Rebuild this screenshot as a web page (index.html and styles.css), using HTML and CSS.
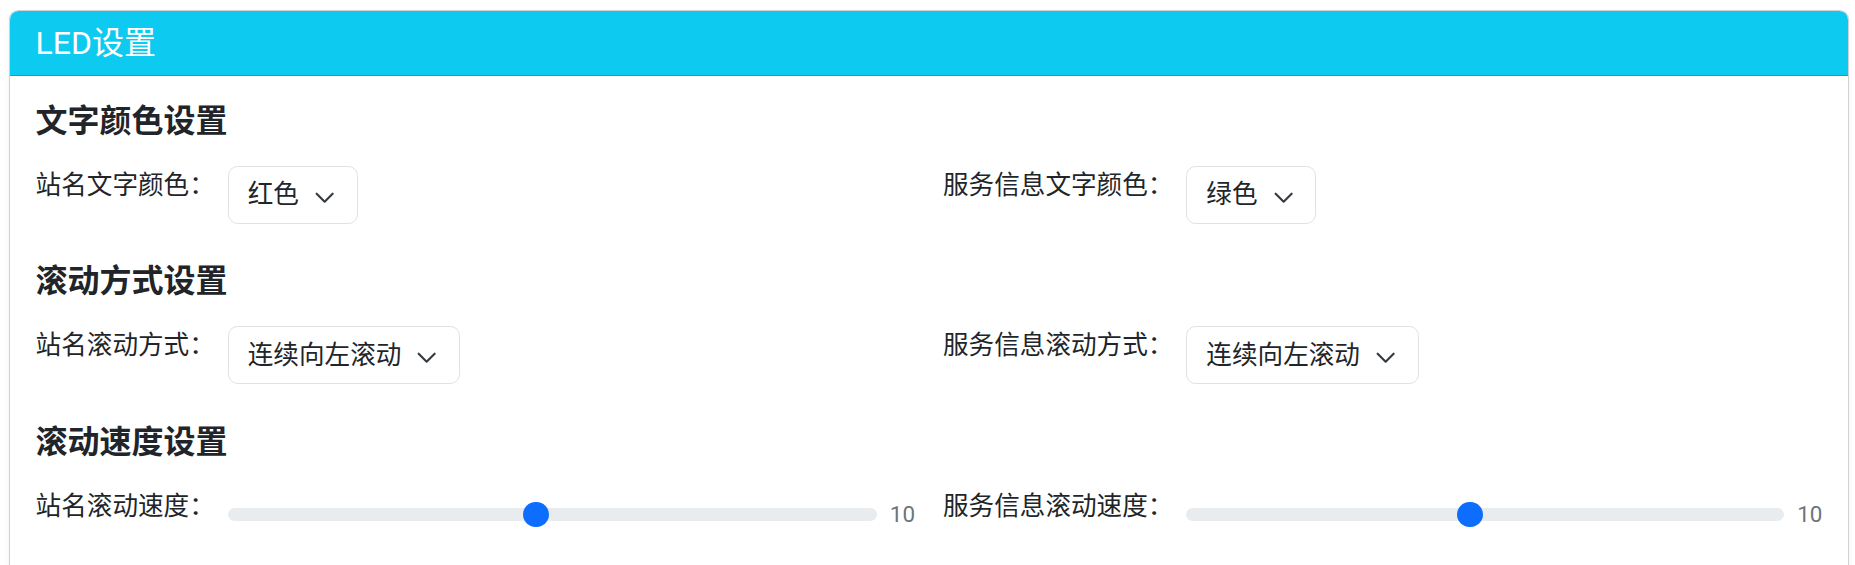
FILE: index.html
```html
<!DOCTYPE html>
<html lang="zh-CN">
<head>
<meta charset="utf-8">
<title>LED设置</title>
<link rel="stylesheet" href="styles.css">
</head>
<body>
<div class="page">
  <div class="card">
    <div class="card-header">LED设置</div>
    <div class="card-body">
      <section class="group">
        <h2 class="group-title">文字颜色设置</h2>
        <div class="grid">
          <div class="field">
            <span class="label">站名文字颜色：</span>
            <div class="select"><span>红色</span><svg class="chev" viewBox="0 0 16 12" width="21.3" height="16"><path d="M2 5l6 6 6-6" fill="none" stroke="#343a40" stroke-width="1.6" stroke-linecap="round" stroke-linejoin="round"/></svg></div>
          </div>
          <div class="field">
            <span class="label">服务信息文字颜色：</span>
            <div class="select"><span>绿色</span><svg class="chev" viewBox="0 0 16 12" width="21.3" height="16"><path d="M2 5l6 6 6-6" fill="none" stroke="#343a40" stroke-width="1.6" stroke-linecap="round" stroke-linejoin="round"/></svg></div>
          </div>
        </div>
      </section>
      <section class="group">
        <h2 class="group-title">滚动方式设置</h2>
        <div class="grid">
          <div class="field">
            <span class="label">站名滚动方式：</span>
            <div class="select"><span>连续向左滚动</span><svg class="chev" viewBox="0 0 16 12" width="21.3" height="16"><path d="M2 5l6 6 6-6" fill="none" stroke="#343a40" stroke-width="1.6" stroke-linecap="round" stroke-linejoin="round"/></svg></div>
          </div>
          <div class="field">
            <span class="label">服务信息滚动方式：</span>
            <div class="select"><span>连续向左滚动</span><svg class="chev" viewBox="0 0 16 12" width="21.3" height="16"><path d="M2 5l6 6 6-6" fill="none" stroke="#343a40" stroke-width="1.6" stroke-linecap="round" stroke-linejoin="round"/></svg></div>
          </div>
        </div>
      </section>
      <section class="group">
        <h2 class="group-title">滚动速度设置</h2>
        <div class="grid">
          <div class="field">
            <span class="label">站名滚动速度：</span>
            <div class="range-wrap">
              <input class="range" type="range" min="1" max="20" value="10">
              <span class="range-value">10</span>
            </div>
          </div>
          <div class="field">
            <span class="label">服务信息滚动速度：</span>
            <div class="range-wrap">
              <input class="range" type="range" min="1" max="20" value="10">
              <span class="range-value">10</span>
            </div>
          </div>
        </div>
      </section>
    </div>
  </div>
</div>
</body>
</html>
```

FILE: styles.css
```css
html, body {
  margin: 0;
  padding: 0;
  background: #ffffff;
}

body {
  font-family: Roboto, "Noto Sans CJK SC", sans-serif;
  color: #212529;
  font-size: 25.6px;
  line-height: 1.5;
}

.page {
  padding: 10px 6px 0 9px;
}

.card {
  border: 1px solid rgba(0, 0, 0, 0.175);
  border-radius: 9.6px;
  background: #fff;
  box-shadow: 0 2px 4px rgba(0, 0, 0, 0.075);
  overflow: hidden;
}

.card-header {
  background: #0dcaf0;
  color: #fff;
  font-size: 32px;
  font-weight: 400;
  line-height: 38.4px;
  padding: 12.8px 25.6px;
  border-bottom: 1px solid rgba(0, 0, 0, 0.175);
}

.card-body {
  padding: 25.6px 25.6px 40px 25.6px;
}

.group + .group {
  margin-top: 38.4px;
}

.group-title {
  margin: 0 0 25.6px 0;
  font-size: 32px;
  font-weight: 700;
  line-height: 38.4px;
  color: #212529;
}

.grid {
  display: grid;
  grid-template-columns: 1fr 1fr;
  column-gap: 28px;
}

.field {
  display: flex;
  align-items: flex-start;
}

.label {
  white-space: nowrap;
  line-height: 38.4px;
  margin-right: 12.8px;
}

.select {
  display: flex;
  align-items: center;
  gap: 15px;
  padding: 9.6px 21.3px 9.6px 19.2px;
  line-height: 37px;
  border: 1px solid #dee2e6;
  border-radius: 9.6px;
  background: #fff;
  color: #212529;
  white-space: nowrap;
}

.chev {
  display: block;
  flex: none;
}

.range-wrap {
  flex: 1;
  display: flex;
  align-items: center;
  gap: 13px;
  height: 38.4px;
  margin-top: 8.5px;
}

.range {
  flex: 1;
  min-width: 0;
  margin: 0;
  padding: 0;
  height: 25.6px;
  background: transparent;
  -webkit-appearance: none;
  appearance: none;
}

.range::-webkit-slider-runnable-track {
  height: 12.8px;
  background: #e9ecef;
  border-radius: 16px;
  border: 0;
}

.range::-webkit-slider-thumb {
  -webkit-appearance: none;
  appearance: none;
  width: 25.6px;
  height: 25.6px;
  margin-top: -6.4px;
  border-radius: 50%;
  background: #0d6efd;
  border: 0;
}

.range-value {
  font-size: 22.4px;
  color: #6c757d;
  line-height: 1;
}
```
